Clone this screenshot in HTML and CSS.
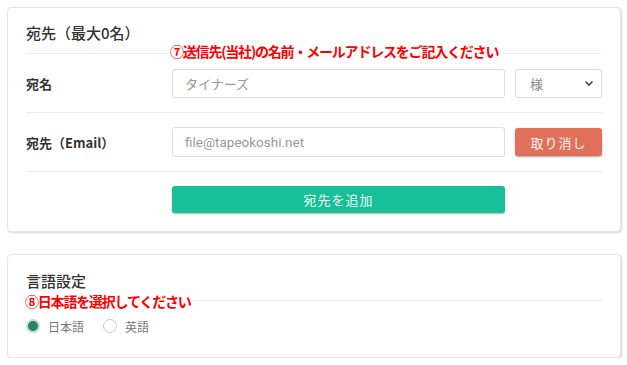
FILE: index.html
```html
<!DOCTYPE html>
<html lang="ja">
<head>
<meta charset="utf-8">
<link rel="stylesheet" href="styles.css">
</head>
<body>
<section class="card card-dest">
  <h2 class="card-title">宛先（最大0名）</h2>
  <div class="row">
    <label class="label">宛名</label>
    <div class="input"><span class="placeholder">タイナーズ</span></div>
    <div class="select"><span>様</span>
      <svg width="10" height="7" viewBox="0 0 10 7"><path d="M1.5 1.5 L5 5 L8.5 1.5" fill="none" stroke="#444" stroke-width="1.6"/></svg>
    </div>
  </div>
  <div class="row">
    <label class="label">宛先（Email）</label>
    <div class="input"><span class="placeholder latin">file@tapeokoshi.net</span></div>
    <button class="btn btn-cancel">取り消し</button>
  </div>
  <div class="row row-add">
    <button class="btn btn-add">宛先を追加</button>
  </div>
  <p class="note note-7">⑦送信先(当社)の名前・メールアドレスをご記入ください</p>
</section>

<section class="card card-lang">
  <h2 class="card-title">言語設定</h2>
  <div class="radios">
    <span class="radio checked"></span><span class="radio-label">日本語</span>
    <span class="radio"></span><span class="radio-label">英語</span>
  </div>
  <p class="note note-8">⑧日本語を選択してください</p>
</section>
</body>
</html>
```

FILE: styles.css
```css
* { box-sizing: border-box; }
body {
  margin: 0;
  background: #fff;
  font-family: "Noto Sans CJK JP", "Noto Sans", sans-serif;
  color: #333;
}
.card {
  position: relative;
  margin-left: 7px;
  width: 614px;
  border: 1px solid #e4e4e4;
  border-radius: 4px;
  box-shadow: 1px 1px 2px rgba(0,0,0,0.16);
  background: #fff;
  padding: 0 18px;
}
.card-dest { margin-top: 7px; }
.card-lang { margin-top: 22px; }
.card-title {
  margin: 0;
  font-size: 15px;
  font-weight: 500;
  line-height: 22px;
  padding-top: 14px;
  padding-bottom: 9px;
  border-bottom: 1px solid #ebebeb;
  color: #333;
}
.card-lang .card-title { padding-top: 15px; padding-bottom: 8px; }
.row {
  display: grid;
  grid-template-columns: 136px 1fr 87px;
  column-gap: 10px;
  align-items: center;
  padding: 15px 0 14px;
  border-bottom: 1px solid #ebebeb;
}
.row + .row { padding-top: 14px; }
.row-add { border-bottom: none; padding: 15px 0 18px; }
.label {
  font-size: 13px;
  font-weight: 700;
  color: #333;
}
.input {
  height: 30px;
  border: 1px solid #dcdde3;
  border-radius: 3px;
  display: flex;
  align-items: center;
  padding-left: 12px;
}
.row:first-of-type .input { height: 29px; }
.placeholder {
  font-size: 13px;
  color: #999;
}
.latin { font-family: Roboto, "Noto Sans", sans-serif; font-size: 13.5px; }
.select {
  height: 29px;
  border: 1px solid #dcdde3;
  border-radius: 3px;
  display: flex;
  align-items: center;
  justify-content: space-between;
  padding: 0 7px 0 14px;
  font-size: 13px;
  color: #888;
}
.btn {
  border: none;
  border-radius: 3px;
  font-family: inherit;
  font-size: 13px;
  color: #fdf3ef;
  padding: 0;
  letter-spacing: 1px;
}
.btn-cancel {
  height: 28px;
  background: #e0705a;
  box-shadow: 0 1px 2px rgba(0,0,0,0.35);
}
.btn-add {
  grid-column: 2;
  height: 27px;
  background: #18bf98;
  color: #eefaf6;
  box-shadow: 0 1px 2px rgba(0,0,0,0.3);
}
.radios {
  display: flex;
  align-items: center;
  height: 18px;
  margin: 16px 0 22px;
}
.radio {
  width: 14px;
  height: 14px;
  border-radius: 50%;
  border: 1px solid #c9c9c9;
  background: #fff;
}
.radio.checked {
  border: 2px solid #d4d4d4;
  background: #1d8a5b;
}
.radio-label {
  font-size: 12px;
  color: #777;
  margin-left: 8px;
  margin-right: 19px;
}
.note {
  position: absolute;
  margin: 0;
  background: #fff;
  color: #f00;
  font-weight: 700;
  font-size: 14px;
  line-height: 17px;
  letter-spacing: -1.2px;
  padding: 0 1px;
}
.note-7 { left: 161px; top: 35px; }
.note-8 { left: 16px; top: 38px; }
```
